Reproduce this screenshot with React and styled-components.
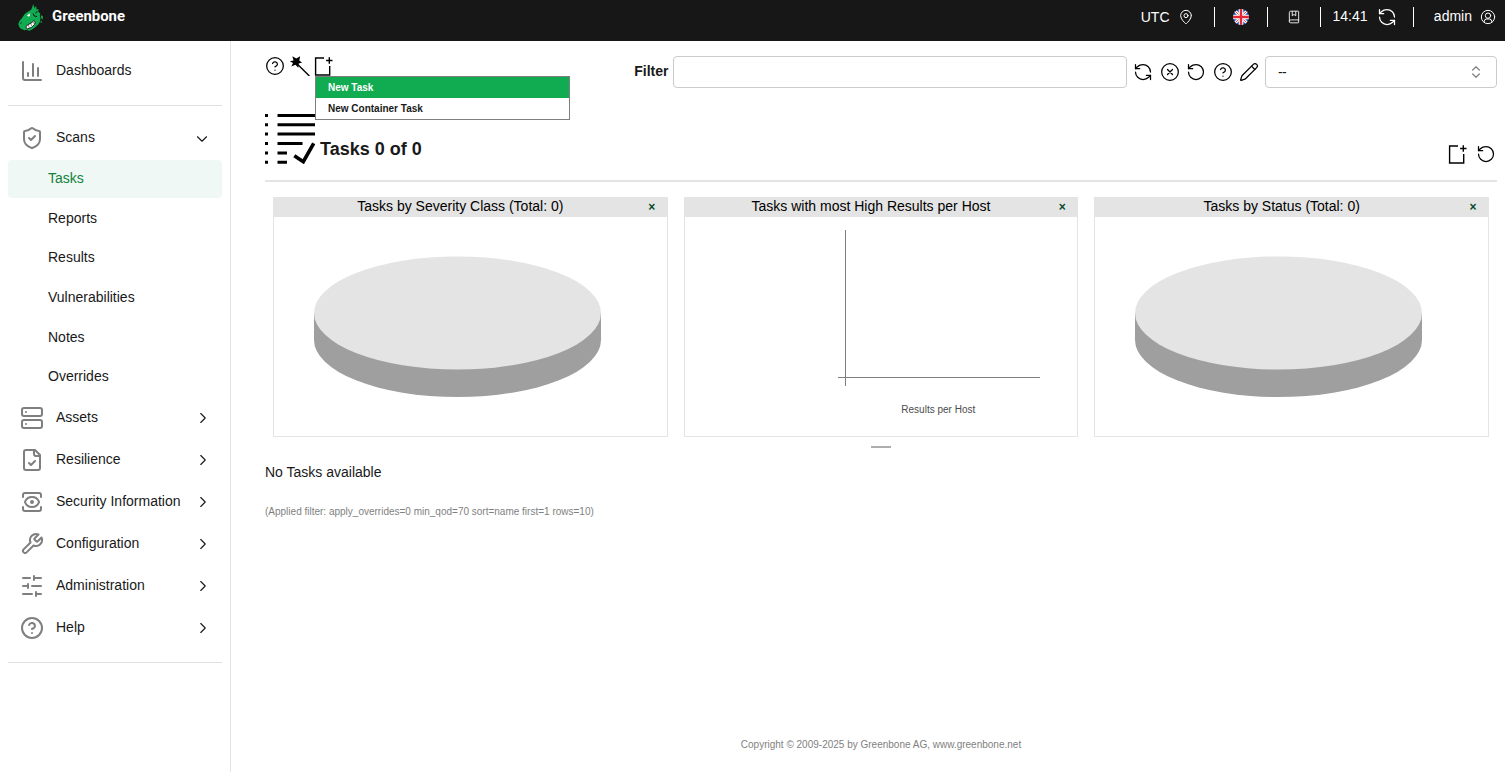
import React from 'react';
import styled, { createGlobalStyle } from 'styled-components';

const Global = createGlobalStyle`
  *, *::before, *::after { box-sizing: border-box; }
  body {
    margin: 0;
    background: #fff;
    color: #191919;
    font-family: "Liberation Sans", Arial, sans-serif;
    font-size: 14px;
    line-height: 20px;
  }
  svg { display: block; flex: none; }
`;

/* ---------- icons ---------- */

const Svg = styled.svg.attrs({ viewBox: '0 0 24 24' })`
  width: ${(p) => p.$size || 20}px;
  height: ${(p) => p.$size || 20}px;
  fill: none;
  stroke: currentColor;
  stroke-width: ${(p) => p.$weight || 1.5};
  stroke-linecap: round;
  stroke-linejoin: round;
`;

const glyphs = {
  chart: <><path d="M3 3v16a2 2 0 0 0 2 2h16" /><path d="M18 17V9" /><path d="M13 17V5" /><path d="M8 17v-3" /></>,
  shield: <><path d="M20 13c0 5-3.5 7.5-7.66 8.95a1 1 0 0 1-.67-.01C7.5 20.5 4 18 4 13V6a1 1 0 0 1 1-1c2 0 4.5-1.2 6.24-2.72a1.17 1.17 0 0 1 1.52 0C14.51 3.81 17 5 19 5a1 1 0 0 1 1 1z" /><path d="m9 12 2 2 4-4" /></>,
  server: <><rect width="20" height="8" x="2" y="2" rx="2" /><rect width="20" height="8" x="2" y="14" rx="2" /><path d="M6 6h.01M6 18h.01" /></>,
  fileCheck: <><path d="M15 2H6a2 2 0 0 0-2 2v16a2 2 0 0 0 2 2h12a2 2 0 0 0 2-2V7Z" /><path d="M14 2v4a2 2 0 0 0 2 2h4" /><path d="m9 15 2 2 4-4" /></>,
  view: <><path d="M21 17v2a2 2 0 0 1-2 2H5a2 2 0 0 1-2-2v-2" /><path d="M21 7V5a2 2 0 0 0-2-2H5a2 2 0 0 0-2 2v2" /><circle cx="12" cy="12" r="1" /><path d="M18.944 12.33a1 1 0 0 0 0-.66 7.5 7.5 0 0 0-13.888 0 1 1 0 0 0 0 .66 7.5 7.5 0 0 0 13.888 0" /></>,
  wrench: <path d="M14.7 6.3a1 1 0 0 0 0 1.4l1.6 1.6a1 1 0 0 0 1.4 0l3.77-3.77a6 6 0 0 1-7.94 7.94l-6.91 6.91a2.12 2.12 0 0 1-3-3l6.91-6.91a6 6 0 0 1 7.94-7.94l-3.76 3.76z" />,
  sliders: <path d="M21 4h-7M10 4H3M21 12h-9M8 12H3M21 20h-5M12 20H3M14 2v4M8 10v4M16 18v4" />,
  help: <><circle cx="12" cy="12" r="10" /><path d="M9.09 9a3 3 0 0 1 5.83 1c0 2-3 3-3 3" /><path d="M12 17h.01" /></>,
  down: <path d="m6 9 6 6 6-6" />,
  right: <path d="m9 18 6-6-6-6" />,
  updown: <path d="m7 15 5 5 5-5M7 9l5-5 5 5" />,
  pin: <><path d="M20 10c0 4.993-5.539 10.193-7.399 11.799a1 1 0 0 1-1.202 0C9.539 20.193 4 14.993 4 10a8 8 0 0 1 16 0" /><circle cx="12" cy="10" r="3" /></>,
  book: <><path d="M4 19.5v-15A2.5 2.5 0 0 1 6.5 2H19a1 1 0 0 1 1 1v18a1 1 0 0 1-1 1H6.5a2.5 2.5 0 0 1 0-5H20" /><path d="M9 2.5V10l3-2.5L15 10V2.5" /></>,
  refresh: <><path d="M21 12a9 9 0 0 0-9-9 9.75 9.75 0 0 0-6.74 2.74L3 8" /><path d="M3 3v5h5" /><path d="M3 12a9 9 0 0 0 9 9 9.75 9.75 0 0 0 6.74-2.74L21 16" /><path d="M16 16h5v5" /></>,
  reset: <><path d="M3 12a9 9 0 1 0 9-9 9.75 9.75 0 0 0-6.74 2.74L3 8" /><path d="M3 3v5h5" /></>,
  clear: <><circle cx="12" cy="12" r="10" /><path d="m15 9-6 6M9 9l6 6" /></>,
  pencil: <><path d="M21.174 6.812a1 1 0 0 0-3.986-3.987L3.842 16.174a2 2 0 0 0-.5.83l-1.321 4.352a.5.5 0 0 0 .623.622l4.353-1.32a2 2 0 0 0 .83-.497z" /><path d="m15 5 4 4" /></>,
  user: <><circle cx="12" cy="12" r="10" /><circle cx="12" cy="10" r="4" /><path d="M6.5 20v-1.5a3.5 3.5 0 0 1 3.5-3.5h4a3.5 3.5 0 0 1 3.5 3.5V20" /></>,
};

const Icon = ({ name, size, weight, ...rest }) => (
  <Svg $size={size} $weight={weight} {...rest}>{glyphs[name]}</Svg>
);

const NewIcon = () => (
  <svg width="20" height="20" viewBox="0 0 20 20" fill="none" stroke="#000" strokeWidth="1.4">
    <path d="M11 2H2.6v17H16.7V10" />
    <path d="M16.3 1.3v6.4M13.1 4.5h6.4" />
  </svg>
);

const WandIcon = () => (
  <svg width="21" height="20" viewBox="0 0 21 20">
    <path d="M8 7.8 20.4 20" stroke="#000" strokeWidth="1.4" />
    <path d="M3.3.2 7.3 2.6 11.2.2 10.3 4.5 13 6.6 9.7 7.4 9.3 11.7 6.5 8.8 2.3 10.5 4 6.9.8 5.2 4.6 4.5Z" fill="#000" />
  </svg>
);

const TaskListIcon = () => (
  <svg width="50" height="50" viewBox="0 0 50 50" stroke="#000" strokeWidth="3" fill="none">
    <path d="M0 1.5h3M0 10.8h3M0 20.1h3M0 29.5h3M0 38.9h3M0 48.3h3" />
    <path d="M12.5 1.5H50M12.5 10.8H50M12.5 20.1H50M12.5 29.5h25M12.5 38.9h9.5M12.5 48.3h9.5" />
    <path d="M29.3 41.8 38.3 47.7 48.7 29.3" strokeWidth="3.6" />
  </svg>
);

const Flag = () => (
  <svg width="16" height="16" viewBox="0 0 16 16">
    <clipPath id="flag-disc"><circle cx="8" cy="8" r="8" /></clipPath>
    <g clipPath="url(#flag-disc)">
      <path d="M0 0h16v16H0z" fill="#1c56b0" />
      <path d="m0 0 16 16M16 0 0 16" stroke="#fff" strokeWidth="3" />
      <path d="m0 0 16 16M16 0 0 16" stroke="#e5404c" strokeWidth="1" />
      <path d="M8 0v16M0 8h16" stroke="#fff" strokeWidth="4.6" />
      <path d="M8 0v16M0 8h16" stroke="#e32636" strokeWidth="2.4" />
    </g>
  </svg>
);

const Mascot = () => (
  <svg width="26" height="28" viewBox="0 0 26 28">
    <path d="M15.3 0 16.3 4 18.2 2 18.5 5.6 20.5 5 20.3 8 22.3 9.2 21.8 11.5 22.5 14 22 17.500 20.500 20.300 17.500 23 14 25.500 11.500 26.700 8.300 25.800 6.500 26.200 2.800 24.700 1.200 23 .3 20 1.300 17.200 4.300 13.600 7 9.800 9.500 7.900 13.200 5.800Z" fill="#11ab51" />
    <path d="m23 11 2.200 1.800-1 3-1-1.500ZM23.200 16.600l1 1.600-2 .8Z" fill="#11ab51" />
    <path d="M9 11.200 12.200 9.300 11.700 12.200 10 12.500Z" fill="#fff" />
    <path d="M7.800 23 9.300 21 13 19.200 15.800 16.700 17.200 17.700 16.700 20.300 13.500 23.300 9.300 25Z" fill="#fff" stroke="#171717" strokeWidth=".9" />
    <path d="m10.200 20.700 1 2.800M12.700 19.500l1 2.500M15 17.700l1 2" stroke="#171717" strokeWidth=".5" />
    <path d="M15 9.500 16.300 12l2.700.6M17.300 9l2.200-1.500M2.300 19.300l1.300-.6" stroke="#171717" strokeWidth="1" fill="none" />
  </svg>
);

/* ---------- header ---------- */

const Header = styled.header`
  display: flex;
  justify-content: space-between;
  height: 41px;
  background: #171717;
  color: #fff;
`;

const Brand = styled.div`
  display: flex;
  gap: 8px;
  padding: 4px 0 0 18px;
`;

const Wordmark = styled.svg`
  width: 76px;
  height: 24px;
  fill: #fff;
  font: bold 15px Roboto, sans-serif;
`;

const HeaderTools = styled.div`
  display: flex;
  align-items: center;
  height: 34px;
  padding-right: 9px;
`;

const HeaderGroup = styled.div`
  display: flex;
  align-items: center;
  justify-content: ${(p) => (p.$center ? 'center' : 'flex-end')};
  gap: ${(p) => p.$gap || 0}px;
  width: ${(p) => p.$width}px;
  padding-right: ${(p) => p.$end || 0}px;
`;

const HeaderText = styled.span`
  margin-top: ${(p) => (p.$raised ? -2 : 0)}px;
`;

const Separator = styled.i`
  width: 1px;
  height: 20px;
  background: #fff;
`;

/* ---------- sidebar ---------- */

const Body = styled.div`
  display: flex;
  height: 731px;
`;

const Sidebar = styled.nav`
  width: 231px;
  flex: none;
  padding: 9px 8px 0;
  border-right: 1px solid #e4e4e4;
`;

const NavRow = styled.div`
  display: flex;
  align-items: center;
  height: 42px;
  padding: 0 10px 0 12px;
  color: #7f7f7f;
`;

const NavLabel = styled.span`
  flex: 1;
  margin: -2px 0 0 12px;
  color: #191919;
`;

const Chevron = styled(Icon)`
  color: #191919;
  margin-top: ${(p) => (p.name === 'down' ? 2 : 0)}px;
  margin-right: ${(p) => (p.name === 'right' ? 0 : 1)}px;
`;

const Rule = styled.hr`
  height: 1px;
  margin: ${(p) => p.$space};
  border: 0;
  background: #e0e0e0;
`;

const SubNav = styled.div`
  display: flex;
  flex-direction: column;
  gap: 1.66px;
  height: 238px;
  padding-top: 1px;
`;

const SubItem = styled.div`
  flex: none;
  height: 38px;
  padding: 8px 40px;
  border-radius: 4px;
  background: ${(p) => (p.$active ? '#f0f8f6' : 'transparent')};
  color: ${(p) => (p.$active ? '#11823b' : '#191919')};
`;

/* ---------- content ---------- */

const Main = styled.main`
  display: flex;
  flex-direction: column;
  flex: 1;
  padding: 15px 8px 0 34px;
`;

const Toolbar = styled.div`
  display: flex;
  justify-content: space-between;
  height: 32px;
`;

const Actions = styled.div`
  display: flex;
  gap: 4px;
  color: #000;
`;

const MenuAnchor = styled.div`
  position: relative;
  margin-left: -1px;
`;

const Menu = styled.div`
  position: absolute;
  z-index: 2;
  top: 20px;
  left: 2px;
  width: 255px;
  border: 1px solid #7f7f7f;
  background: #fff;
`;

const MenuItem = styled.div`
  height: 21px;
  padding-left: 12px;
  font-size: 10px;
  font-weight: bold;
  line-height: 21px;
  background: ${(p) => (p.$active ? '#11ab51' : '#fff')};
  color: ${(p) => (p.$active ? '#fff' : '#191919')};
`;

const Filter = styled.div`
  display: flex;
  color: #000;
`;

const FilterLabel = styled.label`
  padding: 5px 4.5px 0 0;
  font-weight: bold;
  color: #191919;
`;

const Input = styled.input`
  width: 454px;
  height: 32px;
  border: 1px solid #cbcbcb;
  border-radius: 4px;
  background: #fff;
`;

const FilterIcons = styled.div`
  display: flex;
  align-items: center;
  justify-content: space-between;
  width: 138px;
  padding: 0 6px;
`;

const Select = styled.div`
  display: flex;
  align-items: center;
  justify-content: space-between;
  width: 232px;
  height: 32px;
  padding: 0 12px;
  border: 1px solid #cbcbcb;
  border-radius: 4px;
  color: #191919;
  letter-spacing: -0.6px;
  svg { color: #858585; }
`;

const Section = styled.div`
  display: flex;
  height: 68px;
  margin-top: 26px;
  border-bottom: 2px solid #e4e4e4;
`;

const Title = styled.h1`
  flex: 1;
  margin: 0;
  padding: 24px 0 0 5px;
  font-size: 18px;
  line-height: 22px;
`;

const SectionActions = styled.div`
  display: flex;
  gap: 9px;
  padding: 30px 1px 0 0;
  color: #000;
`;

const Cards = styled.div`
  display: grid;
  grid-template-columns: repeat(3, 1fr);
  gap: 16px;
  padding: 15px 8px 0;
`;

const Card = styled.section`
  height: 240px;
  border: 1px solid #e4e4e4;
  border-top: 0;
`;

const CardHead = styled.header`
  display: flex;
  height: 20px;
  padding-right: 10.5px;
  background: #e4e4e4;
  line-height: 19px;
  color: #000;
  text-align: center;
`;

const CardTitle = styled.span`
  flex: 1;
  padding-right: 0.5px;
`;

const Close = styled.b`
  width: 9px;
  font-size: 12px;
  line-height: 20px;
  color: #0a4b2b;
`;

const Chart = styled.svg`
  width: 100%;
  height: 219px;
`;

const Handle = styled.i`
  align-self: center;
  width: 20px;
  height: 2px;
  margin-top: 9px;
  background: #aeaeae;
`;

const Empty = styled.p`
  margin: 14px 0 0;
`;

const Small = styled.p`
  margin: ${(p) => p.$space};
  text-align: ${(p) => p.$align || 'left'};
  font-size: 10px;
  line-height: 14px;
  color: #7f7f7f;
`;

const Pie = () => (
  <Chart>
    <path d="M40 96v27a143.5 57 0 0 0 287 0V96z" fill="#9f9f9f" />
    <ellipse cx="183.5" cy="96" rx="143.5" ry="56.5" fill="#e4e4e4" />
  </Chart>
);

const Bars = () => (
  <Chart>
    <path d="M160.5 13v156M153 160.5h202" stroke="#7f7f7f" />
    <text x="253.3" y="196" fontSize="10" fill="#4c4c4c" textAnchor="middle">Results per Host</text>
  </Chart>
);

const DashboardCard = ({ title, children }) => (
  <Card>
    <CardHead><CardTitle>{title}</CardTitle><Close>×</Close></CardHead>
    {children}
  </Card>
);

const NavItem = ({ icon, label, chevron }) => (
  <NavRow>
    <Icon name={icon} size={24} weight={2} />
    <NavLabel>{label}</NavLabel>
    {chevron && <Chevron name={chevron} size={18} weight={1.5} />}
  </NavRow>
);

const sections = [
  ['server', 'Assets'],
  ['fileCheck', 'Resilience'],
  ['view', 'Security Information'],
  ['wrench', 'Configuration'],
  ['sliders', 'Administration'],
  ['help', 'Help'],
];

export default function App() {
  return (
    <>
      <Global />
      <Header>
        <Brand>
          <Mascot />
          <Wordmark><text x="0" y="17" textLength="73" lengthAdjust="spacingAndGlyphs">Greenbone</text></Wordmark>
        </Brand>
        <HeaderTools>
          <HeaderGroup $width={80} $gap={8.5} $end={20}><HeaderText>UTC</HeaderText><Icon name="pin" size={16} /></HeaderGroup>
          <Separator />
          <HeaderGroup $width={52} $center><Flag /></HeaderGroup>
          <Separator />
          <HeaderGroup $width={52} $center><Icon name="book" size={14} /></HeaderGroup>
          <Separator />
          <HeaderGroup $width={92} $gap={9.5} $end={16}><HeaderText $raised>14:41</HeaderText><Icon name="refresh" size={20} /></HeaderGroup>
          <Separator />
          <HeaderGroup $width={82} $gap={8}><HeaderText $raised>admin</HeaderText><Icon name="user" size={16} /></HeaderGroup>
        </HeaderTools>
      </Header>
      <Body>
        <Sidebar>
          <NavItem icon="chart" label="Dashboards" />
          <Rule $space="13px 0 11px" />
          <NavItem icon="shield" label="Scans" chevron="down" />
          <SubNav>
            {['Tasks', 'Reports', 'Results', 'Vulnerabilities', 'Notes', 'Overrides'].map((label) => (
              <SubItem key={label} $active={label === 'Tasks'}>{label}</SubItem>
            ))}
          </SubNav>
          {sections.map(([icon, label]) => <NavItem key={label} icon={icon} label={label} chevron="right" />)}
          <Rule $space="13px 0 0" />
        </Sidebar>
        <Main>
          <Toolbar>
            <Actions>
              <Icon name="help" />
              <WandIcon />
              <MenuAnchor>
                <NewIcon />
                <Menu>
                  <MenuItem $active>New Task</MenuItem>
                  <MenuItem>New Container Task</MenuItem>
                </Menu>
              </MenuAnchor>
            </Actions>
            <Filter>
              <FilterLabel htmlFor="filter">Filter</FilterLabel>
              <Input id="filter" />
              <FilterIcons>
                {['refresh', 'clear', 'reset', 'help', 'pencil'].map((name) => <Icon key={name} name={name} />)}
              </FilterIcons>
              <Select>--<Icon name="updown" size={16} weight={2} /></Select>
            </Filter>
          </Toolbar>
          <Section>
            <TaskListIcon />
            <Title>Tasks 0 of 0</Title>
            <SectionActions><NewIcon /><Icon name="reset" /></SectionActions>
          </Section>
          <Cards>
            <DashboardCard title="Tasks by Severity Class (Total: 0)"><Pie /></DashboardCard>
            <DashboardCard title="Tasks with most High Results per Host"><Bars /></DashboardCard>
            <DashboardCard title="Tasks by Status (Total: 0)"><Pie /></DashboardCard>
          </Cards>
          <Handle />
          <Empty>No Tasks available</Empty>
          <Small $space="23px 0 0">(Applied filter: apply_overrides=0 min_qod=70 sort=name first=1 rows=10)</Small>
          <Small $space="auto 0 20px" $align="center">Copyright © 2009-2025 by Greenbone AG, www.greenbone.net</Small>
        </Main>
      </Body>
    </>
  );
}
